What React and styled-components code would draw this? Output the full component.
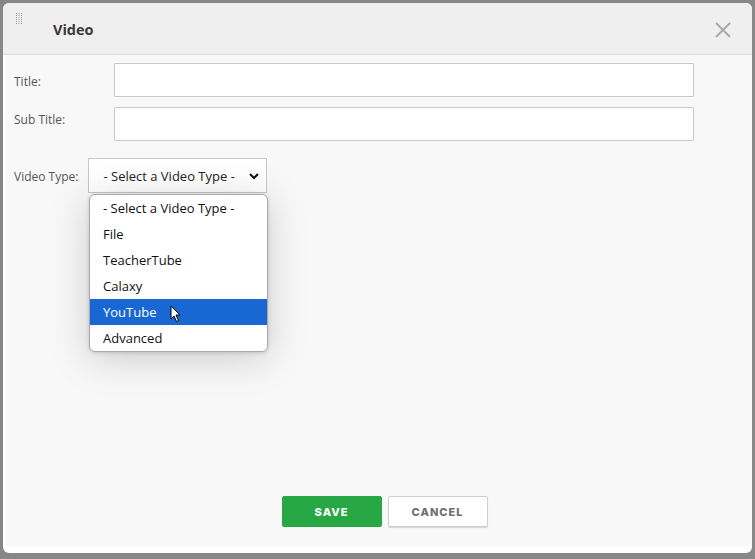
import React from 'react';
import styled, { createGlobalStyle } from 'styled-components';

const GlobalStyle = createGlobalStyle`
  html, body {
    margin: 0;
    padding: 0;
    background: #878787;
    font-family: 'Open Sans', 'Liberation Sans', sans-serif;
  }
  * {
    box-sizing: border-box;
  }
`;

const Dialog = styled.div`
  margin: 3px 0 0 3px;
  width: 749px;
  height: 550px;
  background: #fff;
  border-radius: 6px;
  overflow: hidden;
  display: flex;
  flex-direction: column;
`;

const Header = styled.div`
  height: 52px;
  flex: none;
  background: #efefef;
  border-bottom: 1px solid #dcdcdc;
  display: flex;
  align-items: center;
  padding: 0 0 0 13px;
  position: relative;
`;

const Handle = styled.svg`
  flex: none;
  margin-top: -19px;
`;

const Heading = styled.h2`
  margin: 0 0 0 30px;
  font-size: 14.5px;
  font-weight: 700;
  color: #3a3a3a;
  padding-top: 2px;
`;

const Close = styled.button`
  position: absolute;
  right: 20px;
  top: 18px;
  width: 18px;
  height: 18px;
  padding: 0;
  border: none;
  background: none;
  cursor: pointer;
`;

const Body = styled.div`
  flex: 1;
  margin: 0 0 7px 3px;
  background: #f8f8f8;
  padding: 8px 0 0 8px;
  display: flex;
  flex-direction: column;
  position: relative;
`;

const FieldRow = styled.div`
  display: flex;
  align-items: flex-start;
  margin-bottom: 10px;
`;

const Label = styled.label`
  width: 100px;
  font-size: 12px;
  color: #555;
  padding-top: ${(p) => p.$pad}px;
`;

const TextInput = styled.input`
  width: 580px;
  height: 34px;
  border: 1px solid #c8c8c8;
  background: #fff;
  border-radius: 1px;
  outline: none;
`;

const TypeRow = styled.div`
  display: flex;
  align-items: center;
  margin-top: 7px;
  position: relative;
`;

const TypeLabel = styled.span`
  font-size: 12px;
  color: #555;
  margin-right: 10px;
  padding-top: 2px;
`;

const SelectBox = styled.div`
  width: 179px;
  height: 35px;
  border: 1px solid #c8c8c8;
  background: #fff;
  display: flex;
  align-items: center;
  justify-content: space-between;
  padding: 0 6px 0 14px;
  font-size: 13px;
  color: #222;
`;

const Menu = styled.ul`
  position: absolute;
  left: 75px;
  top: 36px;
  width: 179px;
  margin: 0;
  padding: 0;
  list-style: none;
  background: #fff;
  border: 1px solid #a8a8a8;
  border-radius: 6px;
  overflow: hidden;
  box-shadow: 0 6px 40px rgba(0, 0, 0, 0.18), 0 1px 4px rgba(0, 0, 0, 0.15);
  z-index: 5;
`;

const Option = styled.li`
  height: 26px;
  line-height: 26px;
  padding-left: 13px;
  font-size: 13px;
  color: ${(p) => (p.$active ? '#fff' : '#111')};
  background: ${(p) => (p.$active ? '#1967d2' : 'transparent')};
  position: relative;
`;

const Pointer = styled.svg`
  position: absolute;
  left: 80px;
  top: 6px;
`;

const Footer = styled.div`
  margin-top: auto;
  padding: 0 0 19px 3px;
  display: flex;
  justify-content: center;
  gap: 6px;
`;

const Button = styled.button`
  width: 100px;
  height: 31px;
  border-radius: 2px;
  font-family: 'Inter', 'Liberation Sans', sans-serif;
  font-size: 11px;
  font-weight: 800;
  letter-spacing: 1px;
  cursor: pointer;
  border: 1px solid ${(p) => (p.$primary ? '#28a745' : '#cfcfcf')};
  background: ${(p) => (p.$primary ? '#28a745' : '#fff')};
  color: ${(p) => (p.$primary ? '#fff' : '#6f6f6f')};
  box-shadow: ${(p) => (p.$primary ? 'none' : '0 1px 1px rgba(0,0,0,0.15)')};
`;

const options = ['- Select a Video Type -', 'File', 'TeacherTube', 'Calaxy', 'YouTube', 'Advanced'];

const dots = [];
for (let r = 0; r < 6; r++) {
  for (let c = 0; c < 3; c++) dots.push([c * 2.5, r * 2]);
}

export default function App() {
  return (
    <>
      <GlobalStyle />
      <Dialog>
        <Header>
          <Handle width="7" height="12" viewBox="0 0 7 12">
            {dots.map(([x, y], i) => (
              <rect key={i} x={x} y={y} width="1" height="1" fill="#999" />
            ))}
          </Handle>
          <Heading>Video</Heading>
          <Close aria-label="close">
            <svg width="18" height="18" viewBox="0 0 18 18">
              <path d="M2 2 L16 16 M16 2 L2 16" stroke="#a8a8a8" strokeWidth="1.8" fill="none" />
            </svg>
          </Close>
        </Header>
        <Body>
          <FieldRow>
            <Label $pad={10}>Title:</Label>
            <TextInput />
          </FieldRow>
          <FieldRow>
            <Label $pad={4}>Sub Title:</Label>
            <TextInput />
          </FieldRow>
          <TypeRow>
            <TypeLabel>Video Type:</TypeLabel>
            <SelectBox>
              <span>- Select a Video Type -</span>
              <svg width="12" height="10" viewBox="0 0 12 10">
                <path d="M2 3 L6 7 L10 3" stroke="#111" strokeWidth="2" fill="none" />
              </svg>
            </SelectBox>
            <Menu>
              {options.map((o) => (
                <Option key={o} $active={o === 'YouTube'}>
                  {o}
                  {o === 'YouTube' && (
                    <Pointer width="12" height="18" viewBox="0 0 12 18">
                      <path
                        d="M1 1 L1 14 L4 11 L6.5 16.5 L8.5 15.5 L6 10 L10 10 Z"
                        fill="#fff"
                        stroke="#000"
                        strokeWidth="1"
                        strokeLinejoin="round"
                      />
                    </Pointer>
                  )}
                </Option>
              ))}
            </Menu>
          </TypeRow>
          <Footer>
            <Button $primary>SAVE</Button>
            <Button>CANCEL</Button>
          </Footer>
        </Body>
      </Dialog>
    </>
  );
}
